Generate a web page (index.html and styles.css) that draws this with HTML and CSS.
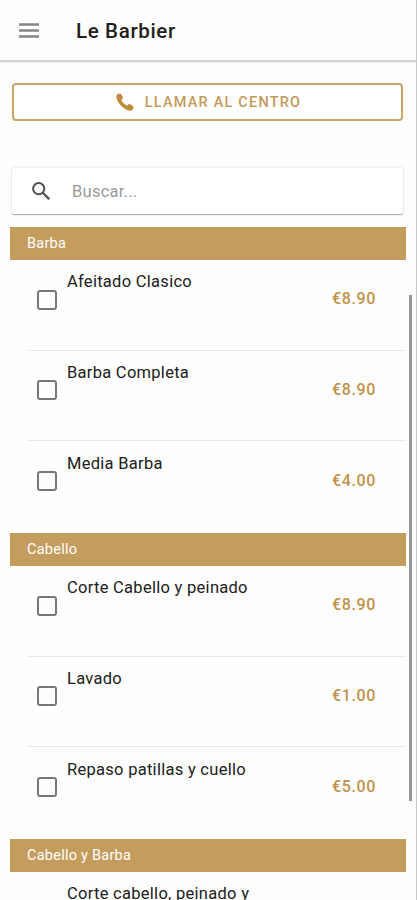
FILE: index.html
```html
<!DOCTYPE html>
<html lang="es">
<head>
<meta charset="utf-8">
<title>Le Barbier</title>
<link rel="stylesheet" href="styles.css">
</head>
<body>
<div class="app">
  <header class="bar">
    <svg class="menu" viewBox="0 0 20 15"><path d="M0 1.500h20M0 7.500h20M0 13.500h20" stroke="#858585" stroke-width="2.600"/></svg>
    <h1><span>Le Barbier</span></h1>
  </header>
  <main>
    <button class="call">
      <svg viewBox="0 0 18 18"><path d="M1.200 1.600C2.600.300 4.200-.100 5 1.100l1.700 2.700c.500.900.200 1.700-.800 2.600-.500.400-.500.800-.200 1.300 1.300 2 2.600 3.300 4.600 4.600.500.300.900.300 1.300-.200.900-1 1.700-1.300 2.600-.800l2.700 1.800c1.100.800.800 2.300-.500 3.700-1 1-2.500 1.300-4.400.600C6.700 15.200 2.800 11.300.700 6 0 4.200.200 2.600 1.200 1.600z" fill="#c08d3e"/></svg>
      <span>LLAMAR AL CENTRO</span>
    </button>
    <label class="search">
      <svg viewBox="0 0 18 18"><circle cx="6.700" cy="6.700" r="5.600" fill="none" stroke="#505050" stroke-width="2"/><path d="M10.800 10.800l6.400 6.400" stroke="#505050" stroke-width="2.300"/></svg>
      <span>Buscar...</span>
    </label>
    <section>
      <h2><span>Barba</span></h2>
      <div class="row"><i class="box"></i><p><span>Afeitado Clasico</span></p><b>€8.90</b></div>
      <div class="row"><i class="box"></i><p><span>Barba Completa</span></p><b>€8.90</b></div>
      <div class="row"><i class="box"></i><p><span>Media Barba</span></p><b>€4.00</b></div>
    </section>
    <section>
      <h2><span>Cabello</span></h2>
      <div class="row"><i class="box"></i><p><span>Corte Cabello y peinado</span></p><b>€8.90</b></div>
      <div class="row"><i class="box"></i><p><span>Lavado</span></p><b>€1.00</b></div>
      <div class="row"><i class="box"></i><p><span>Repaso patillas y cuello</span></p><b>€5.00</b></div>
    </section>
    <section>
      <h2><span>Cabello y Barba</span></h2>
      <div class="row"><i class="box"></i><p><span>Corte cabello, peinado y</span></p></div>
    </section>
  </main>
  <div class="thumb"></div>
</div>
</body>
</html>
```
FILE: styles.css
```css
* { box-sizing: border-box; margin: 0; padding: 0; }
body { background: #fefefe; font-family: Roboto, sans-serif; color: #202020; overflow: hidden; }
.app { position: relative; width: 417px; height: 900px; overflow: hidden; border-right: 1px solid #c9c9c9; }
.bar { display: flex; align-items: center; height: 62px; padding-left: 19px; border-bottom: 2px solid #d2d2d2; box-shadow: 0 1px 1px #eee; }
.menu { width: 20px; height: 15px; margin-right: 37px; }
h1 { padding-top: 2px; font-size: 20.500px; line-height: 24px; font-weight: 500; letter-spacing: .650px; }
main { padding: 21px 0 0 10px; }
.call { display: flex; align-items: center; justify-content: center; width: 391px; height: 38px; margin-left: 2px; padding: 0 0 0 2px; background: #fff; border: 2px solid #cda56b; border-radius: 4px; color: #c49a5a; font: 500 14.500px/20px Roboto, sans-serif; letter-spacing: 1.200px; }
.call svg { width: 18px; height: 18px; margin-right: 11px; }
.search { display: flex; align-items: center; width: 391px; height: 46px; margin: 47px 0 13px 2px; padding-left: 20px; background: #fff; border-radius: 2px; box-shadow: 0 1px 1px #aaa, 0 0 3px #ddd; color: #999; font-size: 16.500px; letter-spacing: .250px; }
.call span { padding-top: 1px; }
.search svg { width: 18px; height: 18px; margin-right: 22px; }
h2 { display: flex; align-items: center; width: 396px; height: 33px; padding-left: 17px; background: #c49c5e; color: #fff; font-size: 14.500px; font-weight: 400; letter-spacing: .250px; }
.row { display: flex; align-items: flex-start; width: 379px; height: 90.600px; margin-left: 17px; padding-left: 10px; border-bottom: 1px solid #e9e9e9; }
.row:last-child { height: 91.800px; border-bottom: 0; }
.box { flex: none; width: 20px; height: 20px; margin: 29.900px 10px 0 0; border: 2px solid #777; border-radius: 3px; }
.row p { flex: 1; padding-top: 12.400px; font-size: 16.500px; line-height: 20px; letter-spacing: .280px; white-space: nowrap; }
.row b { margin: 29.400px 30px 0 0; color: #c0924a; font-size: 16px; line-height: 20px; font-weight: 500; letter-spacing: .650px; }
.thumb { position: absolute; left: 409px; top: 295px; width: 3px; height: 506px; background: #999; }
```
